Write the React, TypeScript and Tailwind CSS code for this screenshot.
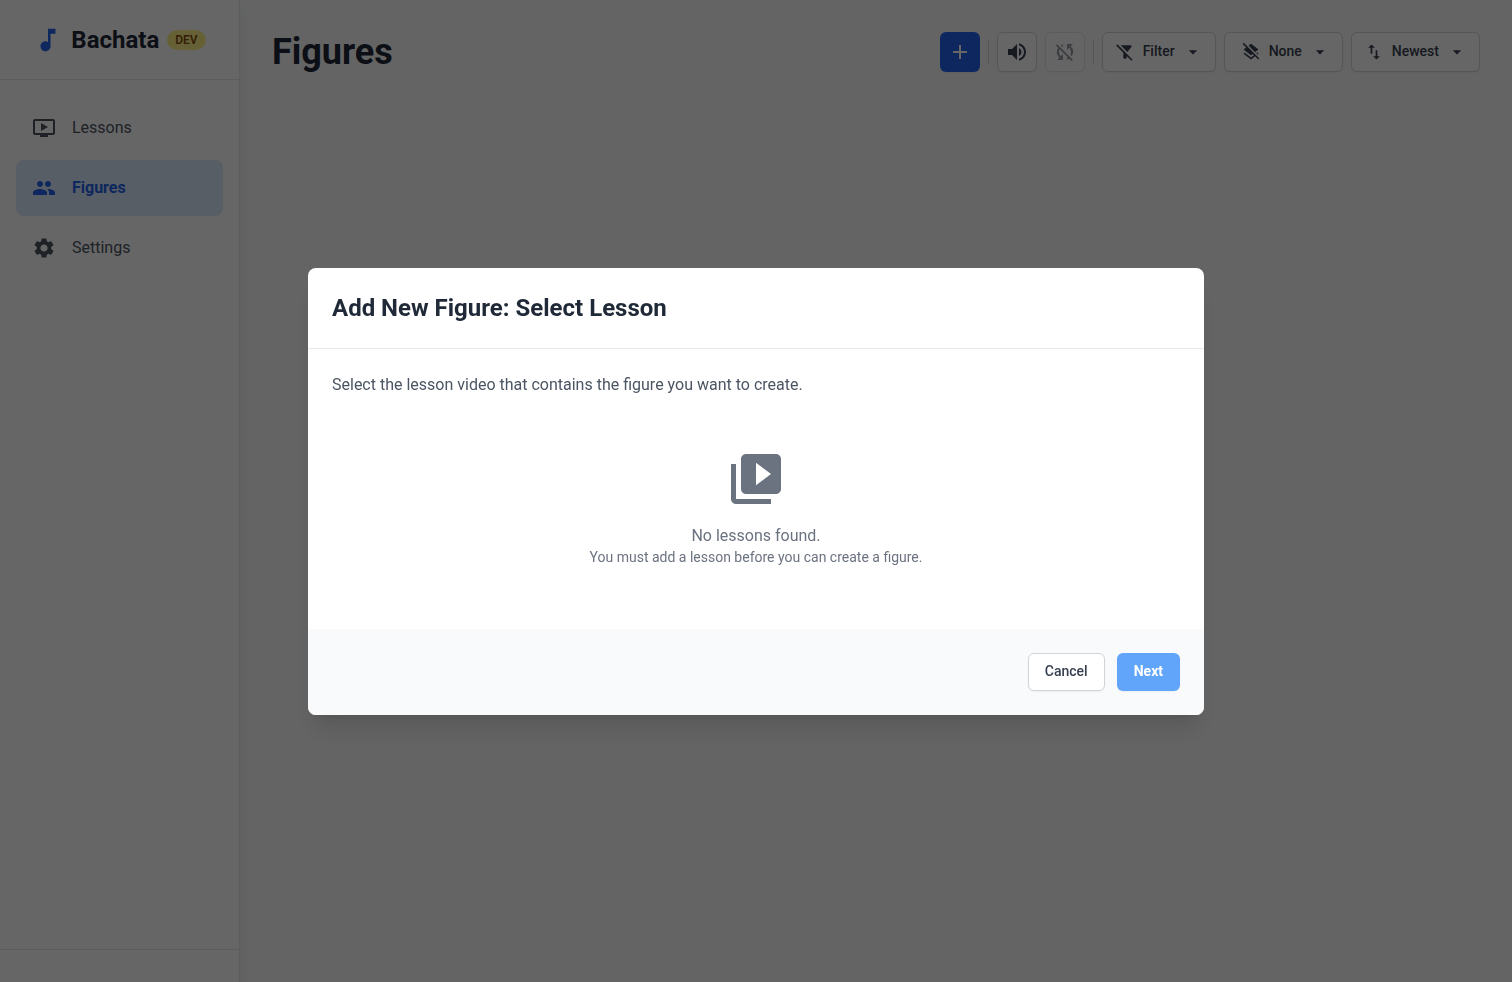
import type { ReactNode } from "react";
import {
  MdAdd,
  MdArrowDropDown,
  MdFilterAltOff,
  MdLayersClear,
  MdMusicNote,
  MdOndemandVideo,
  MdPeople,
  MdSettings,
  MdSwapVert,
  MdSyncDisabled,
  MdVideoLibrary,
  MdVolumeUp,
} from "react-icons/md";

function NavItem({ icon, label, active = false }: { icon: ReactNode; label: string; active?: boolean }) {
  return (
    <a
      href="#"
      aria-current={active ? "page" : undefined}
      className={
        active
          ? "flex items-center gap-4 rounded-lg bg-[#dbeafe] p-4 font-bold text-[#2563eb]"
          : "flex items-center gap-4 rounded-lg p-4 text-[#4b5563]"
      }
    >
      {icon}
      <span>{label}</span>
    </a>
  );
}

function Sidebar() {
  return (
    <aside className="flex w-60 shrink-0 flex-col border-r border-[#e5e7eb] bg-white shadow-lg">
      <div className="flex h-20 items-center justify-center gap-2 border-b border-[#e5e7eb]">
        <MdMusicNote className="size-[30px] text-[#2563eb]" />
        <span className="text-2xl font-bold text-[#1f2937]">Bachata</span>
        <span className="rounded-full bg-[#fef08a] px-2 py-0.5 text-xs font-semibold text-[#854d0e]">DEV</span>
      </div>
      <nav className="flex grow flex-col gap-1 px-4 py-5">
        <NavItem icon={<MdOndemandVideo className="size-6" />} label="Lessons" />
        <NavItem icon={<MdPeople className="size-6" />} label="Figures" active />
        <NavItem icon={<MdSettings className="size-6" />} label="Settings" />
      </nav>
      <div className="border-t border-[#e5e7eb] p-4" />
    </aside>
  );
}

function MenuButton({ icon, label }: { icon: ReactNode; label: string }) {
  return (
    <button
      type="button"
      aria-haspopup="menu"
      className="flex h-10 items-center gap-2 rounded-md border border-[#d1d5db] bg-white px-3 text-sm font-medium text-[#374151] shadow-xs"
    >
      {icon}
      <span className="pb-0.5">{label}</span>
      <MdArrowDropDown className="size-5" />
    </button>
  );
}

function Toolbar() {
  return (
    <div className="flex items-center gap-2">
      <button
        type="button"
        aria-label="Add figure"
        className="flex size-10 items-center justify-center rounded-md bg-[#2563eb] text-white shadow-xs"
      >
        <MdAdd className="size-6" />
      </button>
      <div className="h-6 w-px bg-[#d1d5db]" />
      <button
        type="button"
        aria-label="Sound"
        className="flex size-10 items-center justify-center rounded-md border border-[#d1d5db] bg-white text-[#374151] shadow-xs"
      >
        <MdVolumeUp className="size-6" />
      </button>
      <button
        type="button"
        aria-label="Sync"
        disabled
        className="flex size-10 items-center justify-center rounded-md border border-[#d1d5db] bg-white text-[#374151] opacity-50 shadow-xs"
      >
        <MdSyncDisabled className="size-6" />
      </button>
      <div className="h-6 w-px bg-[#d1d5db]" />
      <MenuButton icon={<MdFilterAltOff className="size-5" />} label="Filter" />
      <MenuButton icon={<MdLayersClear className="ml-1 size-5" />} label="None" />
      <MenuButton icon={<MdSwapVert className="size-5" />} label="Newest" />
    </div>
  );
}

function SelectLessonDialog() {
  return (
    <div className="fixed inset-0 flex items-center justify-center bg-black/60 p-4">
      <div
        role="dialog"
        aria-modal="true"
        aria-labelledby="dialog-title"
        className="flex w-full max-w-4xl flex-col overflow-hidden rounded-lg bg-white shadow-xl"
      >
        <div className="border-b border-[#e5e7eb] p-6">
          <h2 id="dialog-title" className="text-2xl font-bold text-[#1f2937]">
            Add New Figure: Select Lesson
          </h2>
        </div>
        <div className="flex flex-col gap-4 p-6">
          <p className="text-[#4b5563]">Select the lesson video that contains the figure you want to create.</p>
          <div className="flex min-h-48 flex-col items-center pt-9 text-[#6b7280]">
            <MdVideoLibrary className="mb-4 size-[60px]" />
            <p className="leading-[22px]">No lessons found.</p>
            <p className="text-sm">You must add a lesson before you can create a figure.</p>
          </div>
        </div>
        <div className="flex justify-end gap-3 bg-[#f9fafb] p-6">
          <button
            type="button"
            className="rounded-md border border-[#d1d5db] bg-white px-4 pt-[7px] pb-[9px] text-sm font-medium text-[#374151] shadow-xs"
          >
            Cancel
          </button>
          <button
            type="button"
            disabled
            className="rounded-md border border-transparent bg-[#60a5fa] px-4 pt-[7px] pb-[9px] text-sm font-bold text-white shadow-xs"
          >
            Next
          </button>
        </div>
      </div>
    </div>
  );
}

export default function App() {
  return (
    <div className="flex min-h-screen bg-[#f9fafb] font-[Roboto,sans-serif]">
      <Sidebar />
      <main className="grow p-8">
        <header className="flex items-center justify-between">
          <h1 className="text-4xl font-bold text-[#1f2937]">Figures</h1>
          <Toolbar />
        </header>
      </main>
      <SelectLessonDialog />
    </div>
  );
}
